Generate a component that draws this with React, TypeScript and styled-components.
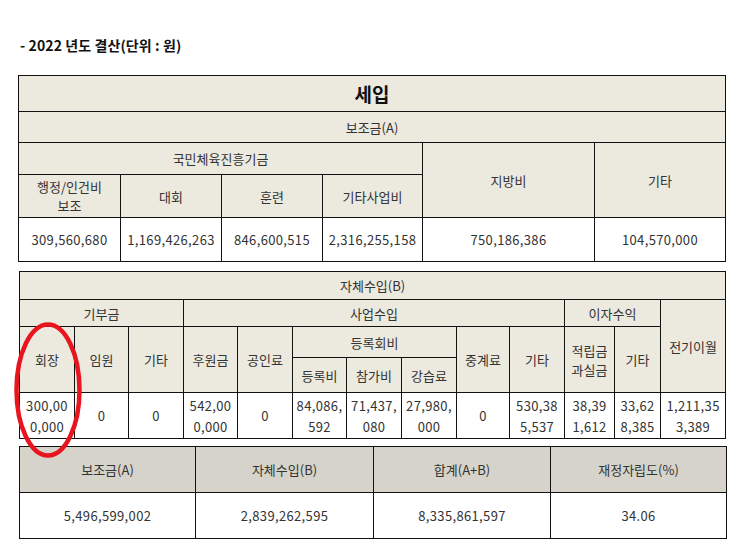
import React from "react";
import styled, { createGlobalStyle } from "styled-components";

const GlobalStyle = createGlobalStyle`
  html, body {
    margin: 0;
    padding: 0;
    background: #ffffff;
  }
  body {
    font-family: "Noto Sans CJK KR", "Noto Sans", sans-serif;
    color: #333333;
  }
`;

const Page = styled.div`
  position: relative;
  width: 739px;
  height: 548px;
  padding: 35px 0 0 18px;
  box-sizing: border-box;
  overflow: hidden;
`;

const Title = styled.h2`
  margin: 0 0 20px 2px;
  font-size: 14px;
  line-height: 20px;
  font-weight: 700;
  color: #111111;
  letter-spacing: 0.1px;
`;

const Table = styled.table<{ $width: number; $gap?: number; $shift?: number }>`
  width: ${(p) => p.$width}px;
  border-collapse: collapse;
  table-layout: fixed;
  margin: 0 0 ${(p) => p.$gap ?? 0}px ${(p) => p.$shift ?? 0}px;
`;

const Row = styled.tr<{ $h: number }>`
  height: ${(p) => p.$h}px;
`;

const Cell = styled.td<{ $head?: boolean; $dark?: boolean }>`
  border: 1px solid #111111;
  padding: 0 1px;
  background: ${(p) => (p.$dark ? "#d6d3cb" : p.$head ? "#ece9df" : "#ffffff")};
  text-align: center;
  vertical-align: middle;
  font-size: 13px;
  line-height: ${(p) => (p.$head || p.$dark ? "19px" : "21px")};
  font-weight: 400;
  color: #333333;
  white-space: nowrap;
  letter-spacing: ${(p) => (p.$head || p.$dark ? "0" : "0.35px")};
`;

const BigHead = styled(Cell)`
  font-size: 19px;
  font-weight: 700;
  color: #111111;
`;

const Mark = styled.svg`
  position: absolute;
  left: 12px;
  top: 320px;
  pointer-events: none;
`;

const Col = ({ widths }: { widths: number[] }) => (
  <colgroup>
    {widths.map((w, i) => (
      <col key={i} style={{ width: w }} />
    ))}
  </colgroup>
);

const Split = ({ a, b }: { a: string; b: string }) => (
  <>
    {a}
    <br />
    {b}
  </>
);

const summary = [
  ["보조금(A)", "5,496,599,002"],
  ["자체수입(B)", "2,839,262,595"],
  ["합계(A+B)", "8,335,861,597"],
  ["재정자립도(%)", "34.06"],
];

export default function App() {
  return (
    <>
      <GlobalStyle />
      <Page>
        <Title>- 2022 년도 결산(단위 : 원)</Title>

        <Table $width={707} $gap={9}>
          <Col widths={[102, 101, 101, 100, 172, 131]} />
          <tbody>
            <Row $h={36}>
              <BigHead as="th" $head colSpan={6}>
                세입
              </BigHead>
            </Row>
            <Row $h={31}>
              <Cell as="th" $head colSpan={6}>
                보조금(A)
              </Cell>
            </Row>
            <Row $h={32}>
              <Cell as="th" $head colSpan={4}>
                국민체육진흥기금
              </Cell>
              <Cell as="th" $head rowSpan={2}>
                지방비
              </Cell>
              <Cell as="th" $head rowSpan={2}>
                기타
              </Cell>
            </Row>
            <Row $h={43}>
              <Cell as="th" $head>
                <Split a="행정/인건비" b="보조" />
              </Cell>
              <Cell as="th" $head>
                대회
              </Cell>
              <Cell as="th" $head>
                훈련
              </Cell>
              <Cell as="th" $head>
                기타사업비
              </Cell>
            </Row>
            <Row $h={44}>
              <Cell>309,560,680</Cell>
              <Cell>1,169,426,263</Cell>
              <Cell>846,600,515</Cell>
              <Cell>2,316,255,158</Cell>
              <Cell>750,186,386</Cell>
              <Cell>104,570,000</Cell>
            </Row>
          </tbody>
        </Table>

        <Table $width={706} $gap={7} $shift={1}>
          <Col widths={[55, 54, 55, 54, 55, 54, 55, 55, 53, 55, 50, 46, 65]} />
          <tbody>
            <Row $h={28}>
              <Cell as="th" $head colSpan={13}>
                자체수입(B)
              </Cell>
            </Row>
            <Row $h={27}>
              <Cell as="th" $head colSpan={3}>
                기부금
              </Cell>
              <Cell as="th" $head colSpan={7}>
                사업수입
              </Cell>
              <Cell as="th" $head colSpan={2}>
                이자수익
              </Cell>
              <Cell as="th" $head rowSpan={3}>
                전기이월
              </Cell>
            </Row>
            <Row $h={31}>
              <Cell as="th" $head rowSpan={2}>
                회장
              </Cell>
              <Cell as="th" $head rowSpan={2}>
                임원
              </Cell>
              <Cell as="th" $head rowSpan={2}>
                기타
              </Cell>
              <Cell as="th" $head rowSpan={2}>
                후원금
              </Cell>
              <Cell as="th" $head rowSpan={2}>
                공인료
              </Cell>
              <Cell as="th" $head colSpan={3}>
                등록회비
              </Cell>
              <Cell as="th" $head rowSpan={2}>
                중계료
              </Cell>
              <Cell as="th" $head rowSpan={2}>
                기타
              </Cell>
              <Cell as="th" $head rowSpan={2}>
                <Split a="적립금" b="과실금" />
              </Cell>
              <Cell as="th" $head rowSpan={2}>
                기타
              </Cell>
            </Row>
            <Row $h={35}>
              <Cell as="th" $head>
                등록비
              </Cell>
              <Cell as="th" $head>
                참가비
              </Cell>
              <Cell as="th" $head>
                강습료
              </Cell>
            </Row>
            <Row $h={46}>
              <Cell>
                <Split a="300,00" b="0,000" />
              </Cell>
              <Cell>0</Cell>
              <Cell>0</Cell>
              <Cell>
                <Split a="542,00" b="0,000" />
              </Cell>
              <Cell>0</Cell>
              <Cell>
                <Split a="84,086," b="592" />
              </Cell>
              <Cell>
                <Split a="71,437," b="080" />
              </Cell>
              <Cell>
                <Split a="27,980," b="000" />
              </Cell>
              <Cell>0</Cell>
              <Cell>
                <Split a="530,38" b="5,537" />
              </Cell>
              <Cell>
                <Split a="38,39" b="1,612" />
              </Cell>
              <Cell>
                <Split a="33,62" b="8,385" />
              </Cell>
              <Cell>
                <Split a="1,211,35" b="3,389" />
              </Cell>
            </Row>
          </tbody>
        </Table>

        <Table $width={707} $shift={1}>
          <Col widths={[176, 178, 177, 176]} />
          <tbody>
            <Row $h={46}>
              {summary.map(([label]) => (
                <Cell as="th" key={label} $dark>
                  {label}
                </Cell>
              ))}
            </Row>
            <Row $h={46}>
              {summary.map(([label, value]) => (
                <Cell key={label}>{value}</Cell>
              ))}
            </Row>
          </tbody>
        </Table>

        <Mark width="74" height="142" viewBox="0 0 74 142">
          <ellipse cx="36" cy="70" rx="31.5" ry="65.5" fill="none" stroke="#e8141e" strokeWidth="4.5" />
        </Mark>
      </Page>
    </>
  );
}
